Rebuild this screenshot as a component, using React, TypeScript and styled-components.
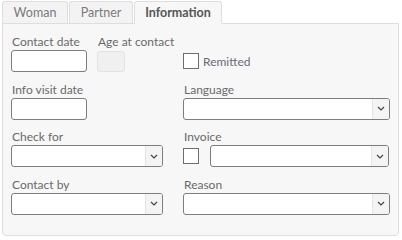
import styled, { createGlobalStyle } from "styled-components";

const GlobalStyle = createGlobalStyle`
  body {
    margin: 0;
    background: #fff;
    font-family: Lato, "Open Sans", "Liberation Sans", sans-serif;
  }
`;

const Wrapper = styled.div`
  padding: 1px 3px 4px 2px;
  width: 402px;
  box-sizing: border-box;
`;

const TabBar = styled.div`
  display: flex;
  height: 22px;
`;

const Tab = styled.div<{ $active?: boolean; $width: number }>`
  width: ${(p) => p.$width}px;
  box-sizing: border-box;
  display: flex;
  align-items: center;
  justify-content: center;
  font-size: 12.5px;
  color: ${(p) => (p.$active ? "#555" : "#7a7a7a")};
  font-weight: ${(p) => (p.$active ? 700 : 400)};
  background: ${(p) => (p.$active ? "#f7f7f7" : "#f3f3f3")};
  border: 1px solid #dedede;
  border-bottom: ${(p) => (p.$active ? "1px solid #f7f7f7" : "none")};
  border-radius: 3px 3px 0 0;
  margin-right: 1px;
  position: relative;
  z-index: ${(p) => (p.$active ? 1 : 0)};
  height: ${(p) => (p.$active ? 23 : 22)}px;
`;

const Panel = styled.div`
  background: #f7f7f7;
  border: 1px solid #dedede;
  border-radius: 0 0 4px 4px;
  padding: 10px 9px 20px 8px;
  display: grid;
  grid-template-columns: 172px 206px;
  row-gap: 9.6px;
`;

const Field = styled.div`
  display: flex;
  flex-direction: column;
`;

const Label = styled.label`
  font-size: 12px;
  line-height: 16px;
  color: #6a6a6a;
  padding-left: 1px;
`;

const Inline = styled.div`
  display: flex;
  gap: 10px;
`;

const TextBox = styled.div<{ $width: number }>`
  width: ${(p) => p.$width}px;
  height: 22px;
  box-sizing: border-box;
  background: #fff;
  border: 1px solid #7d7d7d;
  border-radius: 3px;
`;

const Disabled = styled.div`
  width: 28px;
  height: 21px;
  margin-top: 1px;
  box-sizing: border-box;
  background: #f0f0f0;
  border: 1px solid #e2e2e2;
  border-radius: 3px;
`;

const Select = styled.div<{ $width: number }>`
  width: ${(p) => p.$width}px;
  height: 22px;
  box-sizing: border-box;
  background: #fff;
  border: 1px solid #7d7d7d;
  border-radius: 3px;
  display: flex;
  justify-content: flex-end;
  overflow: hidden;
`;

const Arrow = styled.div`
  width: 16px;
  background: #f4f4f4;
  border-left: 1px solid #e4e4e4;
  display: flex;
  align-items: center;
  justify-content: center;
`;

const CheckRow = styled.div`
  display: flex;
  align-items: center;
  gap: 4px;
  height: 22px;
  margin-top: 16px;
`;

const Check = styled.div`
  width: 16px;
  height: 16px;
  box-sizing: border-box;
  background: #fff;
  border: 1px solid #6e6e6e;
`;

const CheckText = styled.span`
  font-size: 12px;
  color: #6a6a78;
`;

const InvoiceRow = styled.div`
  display: flex;
  align-items: center;
  gap: 11px;
`;

const Chevron = () => (
  <svg width="8" height="5" viewBox="0 0 8 5">
    <path d="M1 1 L4 4 L7 1" fill="none" stroke="#444" strokeWidth="1.2" />
  </svg>
);

const Dropdown = ({ width }: { width: number }) => (
  <Select $width={width}>
    <Arrow>
      <Chevron />
    </Arrow>
  </Select>
);

const App = () => (
  <Wrapper>
    <GlobalStyle />
    <TabBar>
      <Tab $width={66}>Woman</Tab>
      <Tab $width={64}>Partner</Tab>
      <Tab $width={88} $active>
        Information
      </Tab>
    </TabBar>
    <Panel>
      <Inline>
        <Field>
          <Label>Contact date</Label>
          <TextBox $width={76} />
        </Field>
        <Field>
          <Label>Age at contact</Label>
          <Disabled />
        </Field>
      </Inline>
      <CheckRow>
        <Check />
        <CheckText>Remitted</CheckText>
      </CheckRow>

      <Field>
        <Label>Info visit date</Label>
        <TextBox $width={76} />
      </Field>
      <Field>
        <Label>Language</Label>
        <Dropdown width={207} />
      </Field>

      <Field>
        <Label>Check for</Label>
        <Dropdown width={152} />
      </Field>
      <Field>
        <Label>Invoice</Label>
        <InvoiceRow>
          <Check />
          <Dropdown width={180} />
        </InvoiceRow>
      </Field>

      <Field>
        <Label>Contact by</Label>
        <Dropdown width={152} />
      </Field>
      <Field>
        <Label>Reason</Label>
        <Dropdown width={207} />
      </Field>
    </Panel>
  </Wrapper>
);

export default App;
